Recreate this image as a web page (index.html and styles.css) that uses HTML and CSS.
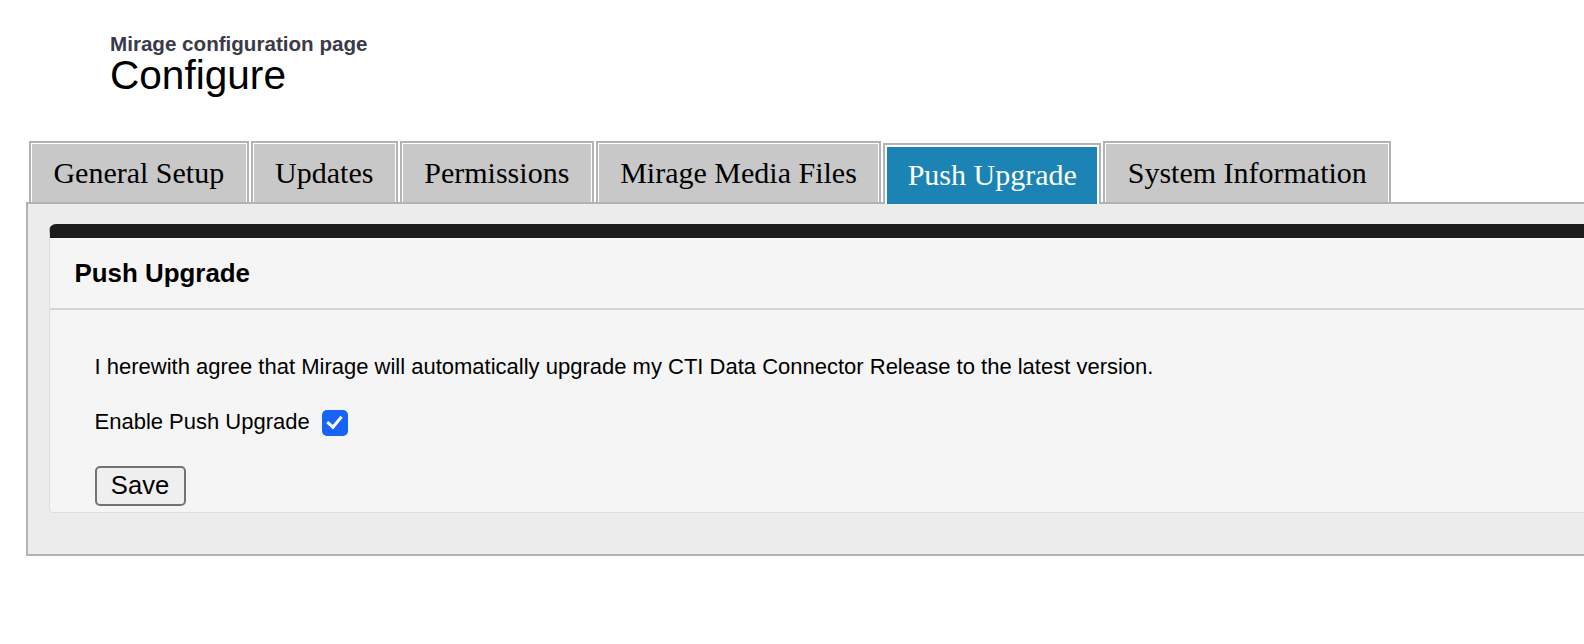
FILE: index.html
```html
<!DOCTYPE html>
<html lang="en">
<head>
<meta charset="utf-8">
<title>Configure</title>
<link rel="stylesheet" href="styles.css">
</head>
<body>
<header class="page-head">
  <div class="page-sub">Mirage configuration page</div>
  <h1 class="page-title">Configure</h1>
</header>

<nav class="tabs">
  <div class="tab">General Setup</div>
  <div class="tab">Updates</div>
  <div class="tab">Permissions</div>
  <div class="tab">Mirage Media Files</div>
  <div class="tab tab-active">Push Upgrade</div>
  <div class="tab">System Information</div>
</nav>

<section class="panel">
  <div class="card">
    <div class="card-head">Push Upgrade</div>
    <div class="card-body">
      <p class="agree">I herewith agree that Mirage will automatically upgrade my CTI Data Connector Release to the latest version.</p>
      <label class="enable-row">
        <span>Enable Push Upgrade</span>
        <input type="checkbox" class="check" checked>
      </label>
      <button type="button" class="save-btn">Save</button>
    </div>
  </div>
</section>
</body>
</html>
```

FILE: styles.css
```css
html, body {
  margin: 0;
  padding: 0;
  background: #ffffff;
}

body {
  font-family: "Liberation Sans", Arial, sans-serif;
  color: #000;
  overflow: hidden;
}

.page-head {
  padding: 32.5px 0 0 110px;
}

.page-sub {
  font-size: 20.6px;
  line-height: 22px;
  font-weight: bold;
  color: #3a3a49;
}

.page-title {
  margin: 0;
  font-size: 40.6px;
  line-height: 40px;
  font-weight: normal;
}

.tabs {
  display: flex;
  align-items: flex-start;
  gap: 2px;
  margin: 46px 0 0 29px;
  position: relative;
  z-index: 2;
}

.tab {
  font-family: "Liberation Serif", "Times New Roman", serif;
  font-size: 30px;
  line-height: 59px;
  height: 59px;
  padding: 0 22.45px;
  background: #c8c8c8;
  border: 2px solid #b3b3b3;
  border-bottom: 0;
  box-shadow: inset 1px 1px 0 #ffffff, inset -1px 0 0 #ffffff;
  white-space: nowrap;
  color: #000;
}

.tab-active {
  margin-top: 2px;
  margin-bottom: -2px;
  background: #1c84b4;
  color: #ffffff;
  box-shadow: inset 2px 2px 0 #ffffff, inset -2px 0 0 #ffffff;
}

.panel {
  margin-left: 26px;
  width: 1640px;
  background: #ececec;
  border: 2px solid #b3b3b3;
  padding: 20px 0 41px 21px;
  position: relative;
  z-index: 1;
}

.card {
  background: #f5f5f5;
  border: 1px solid #dfdfdf;
  border-top: 14px solid #1c1c1c;
  border-radius: 7px 7px 4px 4px;
}

.card-head {
  height: 70px;
  line-height: 70px;
  padding-left: 24.5px;
  font-size: 25.9px;
  font-weight: bold;
  border-bottom: 2px solid #d5d5d5;
}

.card-body {
  padding: 44.5px 0 6px 44.5px;
  font-size: 22px;
  line-height: 25px;
}

.agree {
  margin: 0;
}

.enable-row {
  display: flex;
  align-items: flex-start;
  gap: 12px;
  margin-top: 29.7px;
}

.check {
  appearance: none;
  -webkit-appearance: none;
  margin: 1.3px 0 0 0;
  width: 26px;
  height: 26px;
  border-radius: 5px;
  background: #1663f5;
  position: relative;
  flex: none;
}

.check::after {
  content: "";
  position: absolute;
  left: 8.5px;
  top: 3.5px;
  width: 6px;
  height: 12px;
  border-right: 3.5px solid #ffffff;
  border-bottom: 3.5px solid #ffffff;
  transform: rotate(40deg);
}

.save-btn {
  display: block;
  margin-top: 30px;
  width: 91px;
  height: 40px;
  padding: 0;
  font-family: "Liberation Sans", Arial, sans-serif;
  font-size: 25.6px;
  color: #000;
  background: #efefef;
  border: 2px solid #737373;
  border-radius: 5px;
}
```
